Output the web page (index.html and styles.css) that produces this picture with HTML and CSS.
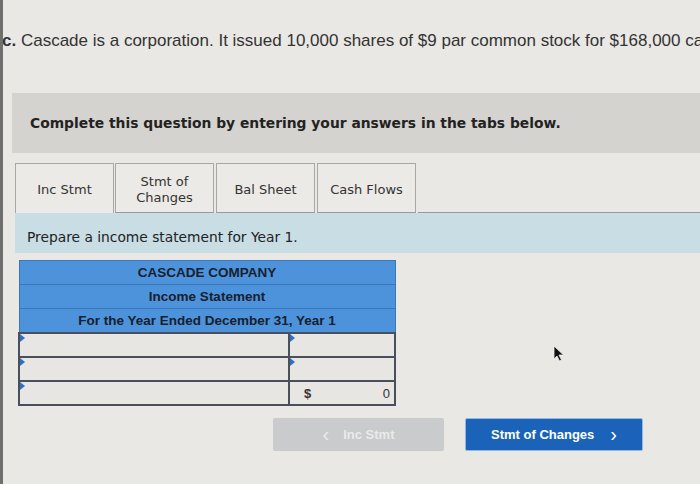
FILE: index.html
```html
<!DOCTYPE html>
<html>
<head>
<meta charset="utf-8">
<link rel="stylesheet" href="styles.css">
</head>
<body>
<div class="page">
  <p class="prompt"><b>c.</b> Cascade is a corporation. It issued 10,000 shares of $9 par common stock for $168,000 cash.</p>
  <div class="instr">Complete this question by entering your answers in the tabs below.</div>
  <div class="tabs">
    <div class="tab active">Inc Stmt</div>
    <div class="tab">Stmt of<br>Changes</div>
    <div class="tab">Bal Sheet</div>
    <div class="tab">Cash Flows</div>
    <div class="tab-rest"></div>
  </div>
  <div class="task">Prepare a income statement for Year 1.</div>
  <table class="stmt">
    <tr class="hd"><td colspan="2">CASCADE COMPANY</td></tr>
    <tr class="hd"><td colspan="2">Income Statement</td></tr>
    <tr class="hd"><td colspan="2">For the Year Ended December 31, Year 1</td></tr>
    <tr class="row"><td class="c1"><span class="mark"></span></td><td class="c2"><span class="mark"></span></td></tr>
    <tr class="row"><td class="c1"><span class="mark"></span></td><td class="c2"><span class="mark"></span></td></tr>
    <tr class="row"><td class="c1"><span class="mark"></span></td><td class="c2 total"><span class="dollar">$</span><span class="zero">0</span></td></tr>
  </table>
  <div class="nav">
    <div class="btn prev"><span class="chev">&lsaquo;</span>Inc Stmt</div>
    <div class="btn next">Stmt of Changes<span class="chev">&rsaquo;</span></div>
  </div>
  <svg class="cursor" width="12" height="17" viewBox="0 0 12 17"><path d="M1 1 L1 14 L4 11 L6.5 16 L8.5 15 L6 10 L10.5 10 Z" fill="#111" stroke="#eee" stroke-width="0.8"/></svg>
</div>
</body>
</html>
```

FILE: styles.css
```css
html, body {
  margin: 0;
  padding: 0;
  background: #e9e8e4;
}
.page {
  position: relative;
  width: 697px;
  height: 484px;
  border-left: 3px solid #6f6f6d;
  overflow: hidden;
  background: #e9e8e4;
}
.prompt {
  margin: 0 0 0 -1px;
  padding-top: 29px;
  height: 24px;
  line-height: 24px;
  font-family: "Liberation Sans", Arial, sans-serif;
  font-size: 17px;
  color: #333;
  white-space: nowrap;
  overflow: hidden;
}
.prompt b { font-weight: bold; }
.instr {
  margin: 40px 0 0 9px;
  height: 60px;
  padding-left: 18px;
  display: flex;
  align-items: center;
  background: #d4d3cf;
  font-family: "DejaVu Sans", Verdana, sans-serif;
  font-weight: bold;
  font-size: 13.85px;
  color: #222;
}
.tabs {
  display: flex;
  margin: 10px 0 0 12px;
  height: 50px;
  align-items: stretch;
}
.tab {
  box-sizing: border-box;
  width: 99px;
  margin-right: 2px;
  padding-top: 3px;
  border: 1px solid #a9a8a4;
  border-bottom: 1px solid #9a9995;
  background: #eceae6;
  display: flex;
  align-items: center;
  justify-content: center;
  text-align: center;
  font-family: "DejaVu Sans", Verdana, sans-serif;
  font-size: 13px;
  line-height: 16px;
  color: #333;
}
.tab.active {
  border-bottom: none;
  margin-right: 1px;
}
.tab-rest {
  flex: 1;
  border-bottom: 1px solid #9a9995;
}
.task {
  box-sizing: border-box;
  margin-left: 12px;
  height: 40px;
  padding: 7px 0 0 12px;
  display: flex;
  align-items: center;
  background: #c8dde4;
  font-family: "DejaVu Sans", Verdana, sans-serif;
  font-size: 13.8px;
  color: #222;
}
.stmt {
  margin: 7px 0 0 15px;
  width: 378px;
  border-collapse: collapse;
  font-family: "Liberation Sans", Arial, sans-serif;
}
.stmt .hd td {
  height: 23px;
  padding: 0;
  background: #4d93dc;
  border: 1px solid #3a76b8;
  text-align: center;
  font-weight: bold;
  font-size: 13.5px;
  color: #18202c;
}
.stmt .row td {
  height: 22px;
  padding: 0;
  background: #e7e6e2;
  border: 2px solid #4a4f5c;
  position: relative;
}
.stmt .c1 { width: 268px; }
.mark {
  position: absolute;
  left: 0;
  top: 0;
  width: 0;
  height: 0;
  border-top: 4px solid transparent;
  border-bottom: 4px solid transparent;
  border-left: 5px solid #2f6fc4;
}
.total {
  font-size: 13px;
  color: #333;
}
.dollar {
  position: absolute;
  left: 14px;
  top: 4px;
  font-weight: bold;
}
.zero {
  position: absolute;
  right: 4px;
  top: 4px;
}
.nav {
  display: flex;
  margin: 12px 0 0 270px;
  gap: 21px;
}
.btn {
  box-sizing: border-box;
  height: 33px;
  display: flex;
  align-items: center;
  justify-content: center;
  font-family: "Liberation Sans", Arial, sans-serif;
  font-weight: bold;
  font-size: 13px;
  border-radius: 2px;
}
.btn.prev {
  width: 171px;
  background: #c9cbcc;
  color: #e9eaea;
}
.btn.prev .chev {
  font-size: 20px;
  margin-right: 14px;
  font-weight: normal;
}
.btn.next {
  width: 178px;
  background: #1b63b8;
  color: #fff;
  border: 1px solid #8fb8e6;
}
.btn.next .chev {
  font-size: 20px;
  margin-left: 16px;
  font-weight: normal;
}
.cursor {
  position: absolute;
  left: 550px;
  top: 345px;
}
```
